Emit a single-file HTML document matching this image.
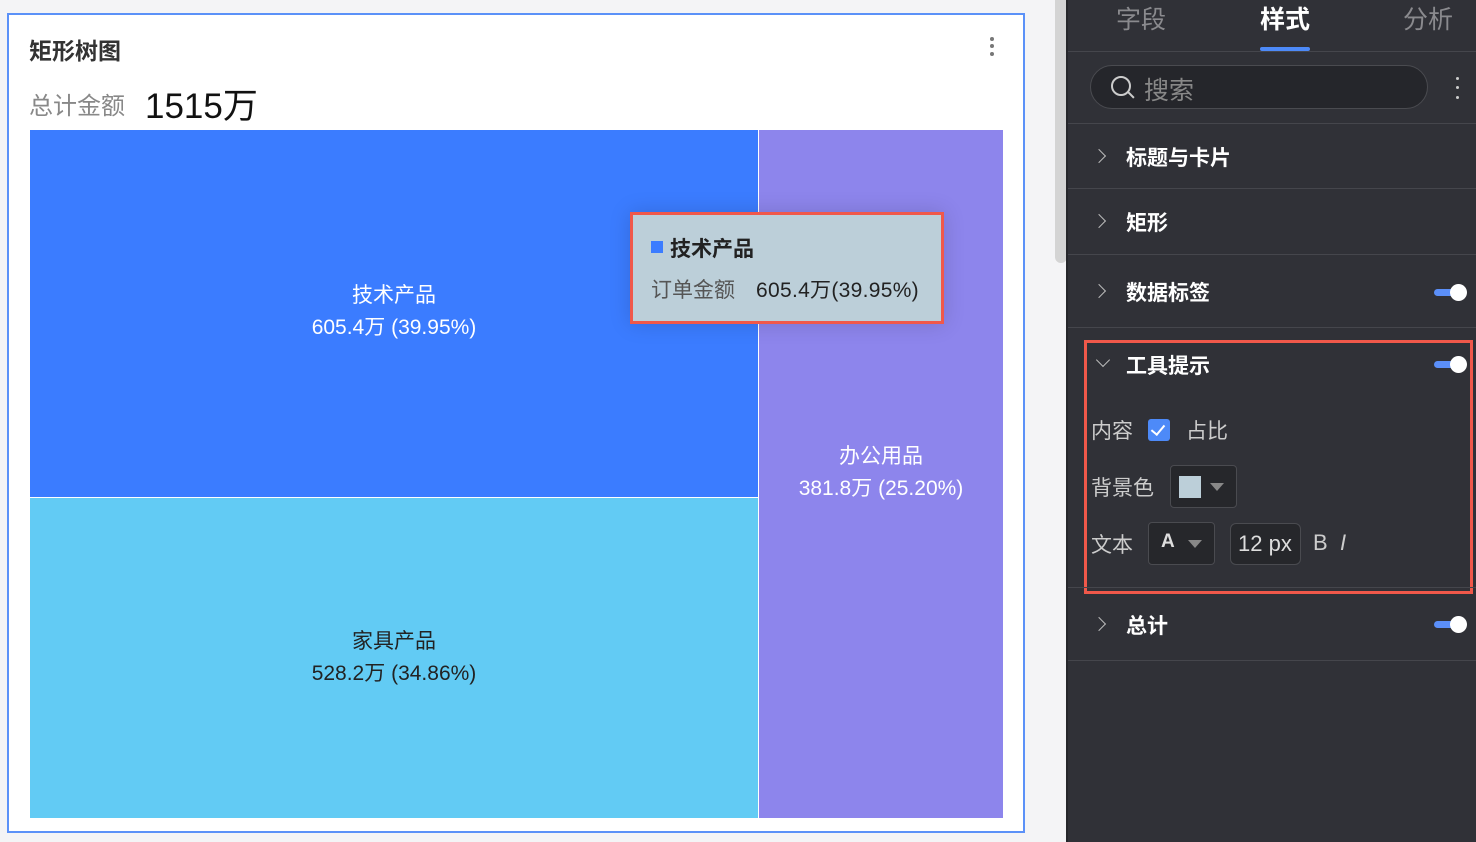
<!DOCTYPE html>
<html><head><meta charset="utf-8"><style>
*{margin:0;padding:0;box-sizing:border-box}
body{width:1476px;height:842px;background:#f4f4f6;font-family:"Liberation Sans","Noto Sans CJK SC",sans-serif;position:relative;overflow:hidden}
.a{position:absolute}
.card{left:7px;top:13px;width:1018px;height:820px;background:#fff;border:2px solid #5b91f8}
.lbl{color:#fff;font-size:21px;text-align:center;line-height:32px}
.panel{left:1068px;top:0;width:408px;height:842px;background:#303137}
.line{left:0;width:408px;height:1px;background:#45464c}
.row{left:58px;color:#fff;font-size:21px;font-weight:bold}
.chev{left:30px;width:10px;height:10px;border-right:1.6px solid #bbb;border-top:1.6px solid #bbb;transform:rotate(45deg)}
.tog{left:366px;width:32px;height:7px;border-radius:4px;background:#5b8ff9}
.tog::after{content:"";position:absolute;right:-1px;top:-5px;width:17px;height:17px;border-radius:50%;background:#fff}
.t{color:#ccc;font-size:21px}
</style></head><body>
<div class="a card"></div>
<div class="a" style="left:29px;top:32px;font-size:23px;font-weight:bold;color:#333">矩形树图</div>
<div class="a" style="left:990px;top:37px;width:4px;height:4px;border-radius:2px;background:#777;box-shadow:0 7px 0 #777,0 15px 0 #777"></div>
<div class="a" style="left:29px;top:86px;font-size:24px;color:#888">总计金额</div>
<div class="a" style="left:145px;top:78px;font-size:35px;color:#111">1515万</div>
<div class="a" style="left:30px;top:130px;width:728px;height:367px;background:#3b7cff"></div>
<div class="a" style="left:30px;top:498px;width:728px;height:320px;background:#62cbf4"></div>
<div class="a" style="left:759px;top:130px;width:244px;height:688px;background:#8d85ec"></div>
<div class="a lbl" style="left:30px;top:280px;width:728px">技术产品<br>605.4万 (39.95%)</div>
<div class="a lbl" style="left:30px;top:626px;width:728px;color:#222">家具产品<br>528.2万 (34.86%)</div>
<div class="a lbl" style="left:759px;top:441px;width:244px">办公用品<br>381.8万 (25.20%)</div>
<div class="a" style="left:630px;top:212px;width:314px;height:112px;background:#bccfd9;border:3px solid #f0584a;box-shadow:0 0 20px rgba(0,0,0,.15)"></div>
<div class="a" style="left:651px;top:241px;width:12px;height:12px;background:#3b7cff"></div>
<div class="a" style="left:670px;top:233px;font-size:21px;font-weight:bold;color:#222">技术产品</div>
<div class="a" style="left:651px;top:274px;font-size:21px;color:#555">订单金额</div>
<div class="a" style="left:756px;top:274px;font-size:21px;color:#222;letter-spacing:0.3px">605.4万(39.95%)</div>
<div class="a" style="left:1055px;top:0;width:12px;height:263px;border-radius:0 0 6px 6px;background:#d4d4d4"></div>
<div class="a" style="left:1066px;top:0;width:2px;height:842px;background:#26272b"></div>
<div class="a panel">
<div class="a" style="left:48px;top:0;font-size:25px;color:#8a8a8e">字段</div>
<div class="a" style="left:192px;top:0;font-size:25px;color:#fff;font-weight:bold">样式</div>
<div class="a" style="left:192px;top:47px;width:50px;height:4px;border-radius:2px;background:#4d8af8"></div>
<div class="a" style="left:335px;top:0;font-size:25px;color:#8a8a8e">分析</div>
<div class="a line" style="top:51px"></div>
<div class="a" style="left:22px;top:65px;width:338px;height:44px;border-radius:22px;background:#25262b;border:1px solid #4a4b50"></div>
<div class="a" style="left:43px;top:76px;width:20px;height:20px;border:2.2px solid #ccc;border-radius:50%"></div>
<div class="a" style="left:59px;top:94px;width:8px;height:2.2px;background:#ccc;transform:rotate(45deg)"></div>
<div class="a" style="left:76px;top:71px;font-size:25px;color:#888">搜索</div>
<div class="a" style="left:388px;top:77px;width:3px;height:3px;border-radius:2px;background:#ccc;box-shadow:0 9px 0 #ccc,0 19px 0 #ccc"></div>
<div class="a line" style="top:123px"></div>
<div class="a chev" style="top:151px;left:26px"></div><div class="a row" style="top:142px">标题与卡片</div>
<div class="a line" style="top:188px"></div>
<div class="a chev" style="top:216px;left:26px"></div><div class="a row" style="top:207px">矩形</div>
<div class="a line" style="top:254px"></div>
<div class="a chev" style="top:286px;left:26px"></div><div class="a row" style="top:277px">数据标签</div>
<div class="a tog" style="top:289px"></div>
<div class="a line" style="top:327px"></div>
<div class="a" style="left:16px;top:340px;width:389px;height:254px;border:3px solid #f0584a"></div>
<div class="a" style="left:30px;top:355px;width:10px;height:10px;border-right:1.6px solid #bbb;border-bottom:1.6px solid #bbb;transform:rotate(45deg)"></div>
<div class="a row" style="top:350px">工具提示</div>
<div class="a tog" style="top:361px"></div>
<div class="a t" style="left:23px;top:415px">内容</div>
<div class="a" style="left:80px;top:419px;width:22px;height:22px;border-radius:3px;background:#4d8af8"></div>
<div class="a" style="left:86px;top:422px;width:8px;height:13px;border-right:2.5px solid #fff;border-bottom:2.5px solid #fff;transform:rotate(40deg)"></div>
<div class="a t" style="left:118px;top:415px">占比</div>
<div class="a t" style="left:23px;top:472px">背景色</div>
<div class="a" style="left:102px;top:465px;width:67px;height:43px;border-radius:4px;background:#26272b;border:1px solid #4a4b50"></div>
<div class="a" style="left:111px;top:476px;width:22px;height:22px;background:#bccfd9"></div>
<div class="a" style="left:142px;top:483px;border-left:7px solid transparent;border-right:7px solid transparent;border-top:8px solid #888"></div>
<div class="a t" style="left:23px;top:529px">文本</div>
<div class="a" style="left:80px;top:522px;width:67px;height:43px;border-radius:4px;background:#26272b;border:1px solid #4a4b50"></div>
<div class="a" style="left:93px;top:531px;font-size:19px;font-weight:bold;color:#ddd">A</div>
<div class="a" style="left:120px;top:540px;border-left:7px solid transparent;border-right:7px solid transparent;border-top:8px solid #888"></div>
<div class="a" style="left:162px;top:523px;width:71px;height:42px;border-radius:6px;background:#26272b;border:1px solid #4a4b50"></div>
<div class="a" style="left:170px;top:531px;font-size:22px;color:#ddd">12 px</div>
<div class="a" style="left:245px;top:530px;font-size:22px;color:#ccc">B</div>
<div class="a" style="left:272px;top:530px;font-size:22px;color:#ccc;font-style:italic">I</div>
<div class="a line" style="top:587px"></div>
<div class="a chev" style="top:619px;left:26px"></div><div class="a row" style="top:610px">总计</div>
<div class="a tog" style="top:621px"></div>
<div class="a line" style="top:660px"></div>
</div>
</body></html>
